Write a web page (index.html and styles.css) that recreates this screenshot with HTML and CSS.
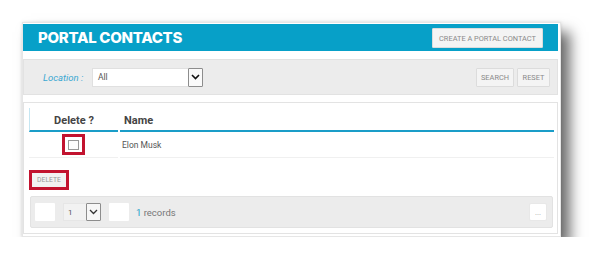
FILE: index.html
```html
<!DOCTYPE html>
<html>
<head>
<meta charset="utf-8">
<link rel="stylesheet" href="styles.css">
</head>
<body>
<div class="page">
  <div class="frame">
    <div class="titlebar">
      <h1 class="title">PORTAL CONTACTS</h1>
      <button class="btn btn-create">CREATE A PORTAL CONTACT</button>
    </div>
    <div class="filter">
      <span class="label">Location :</span>
      <div class="select select-loc">
        <span class="select-text">All</span>
        <span class="arrow"><svg width="9" height="6" viewBox="0 0 9 6"><path d="M1 1 L4.5 4.5 L8 1" fill="none" stroke="#111" stroke-width="1.6"/></svg></span>
      </div>
      <div class="spacer"></div>
      <button class="btn btn-search">SEARCH</button>
      <button class="btn btn-reset">RESET</button>
    </div>
    <div class="panel">
      <div class="thead">
        <div class="th th-del">Delete ?</div>
        <div class="th th-name">Name</div>
      </div>
      <div class="trow">
        <div class="td td-del"><span class="mark"><span class="cb"></span></span></div>
        <div class="td td-name">Elon Musk</div>
      </div>
      <div class="actions">
        <span class="mark mark-btn"><button class="btn-delete">DELETE</button></span>
      </div>
      <div class="footer">
        <span class="pbox"></span>
        <div class="select select-page">
          <span class="select-text">1</span>
          <span class="arrow"><svg width="9" height="6" viewBox="0 0 9 6"><path d="M1 1 L4.5 4.5 L8 1" fill="none" stroke="#333" stroke-width="1.3"/></svg></span>
        </div>
        <span class="pbox"></span>
        <span class="records"><span class="num">1</span> records</span>
        <div class="spacer"></div>
        <button class="btn-more">...</button>
      </div>
    </div>
  </div>
</div>
</body>
</html>
```
FILE: styles.css
```css
html, body { margin: 0; padding: 0; background: #fff; }
body { font-family: Roboto, "Liberation Sans", Arial, sans-serif; }
.page { padding: 22px 0 0 22px; }
.frame {
  width: 535px;
  height: 210px;
  background: #fff;
  padding: 1px 2px 2px 0;
  border: 1px solid #e6e6e6;
  box-sizing: content-box;
  box-shadow: 9px 10px 13px rgba(0,0,0,0.58), 0 0 3px rgba(0,0,0,0.12);
  display: flex;
  flex-direction: column;
}
.titlebar {
  height: 27px;
  background: #07a0c8;
  display: flex;
  align-items: center;
  padding: 0 15px 0 15px;
  flex-shrink: 0;
}
.title {
  margin: 0;
  flex: 1;
  font-family: Inter, "DejaVu Sans", sans-serif;
  font-weight: 800;
  font-size: 15px;
  color: #fff;
  letter-spacing: -0.3px;
  line-height: 1;
}
.btn {
  font-family: Roboto, "Liberation Sans", sans-serif;
  background: #f4f4f4;
  border: 1px solid #dcdcdc;
  color: #8a8a8a;
  font-size: 7.4px;
  padding: 0;
  height: 20px;
  border-radius: 1px;
}
.btn-create { width: 111px; height: 20px; margin-top: 1px; }
.filter {
  margin-top: 8px;
  height: 34px;
  background: #ececec;
  border: 1px solid #e2e2e2;
  display: flex;
  align-items: center;
  padding: 0 7px 0 19px;
  flex-shrink: 0;
}
.label {
  font-style: italic;
  color: #3aa8d2;
  font-size: 9.5px;
  width: 49px;
}
.select {
  display: flex;
  align-items: stretch;
  background: #fff;
  border: 1px solid #e0e0e0;
  box-sizing: border-box;
}
.select-loc { width: 111px; height: 19px; }
.select-text { flex: 1; font-size: 8.5px; color: #555; padding-left: 5px; display: flex; align-items: center; }
.arrow {
  width: 13px;
  border: 1px solid #8d8d8d;
  border-radius: 1px;
  background: #fafafa;
  display: flex;
  align-items: center;
  justify-content: center;
  margin: -1px -1px -1px 0;
}
.spacer { flex: 1; }
.btn-search { width: 38px; height: 19px; margin-right: 3px; }
.btn-reset { width: 33px; height: 19px; }
.panel {
  margin-top: 7px;
  border: 1px solid #e3e3e3;
  background: #fff;
  padding: 5px 3px 5px 5px;
  flex: 1;
  display: flex;
  flex-direction: column;
}
.thead { display: flex; height: 24px; gap: 2px; }
.th {
  font-size: 11px;
  font-weight: bold;
  color: #444;
  border-bottom: 2px solid #1a9dc8;
  display: flex;
  align-items: center;
  box-sizing: border-box;
}
.th-del {
  width: 89px;
  justify-content: center;
  border-left: 1px solid #c5e6f2;
  padding-top: 2px;
}
.th-name { flex: 1; padding-left: 4px; padding-top: 2px; }
.trow { display: flex; height: 26px; gap: 2px; }
.td {
  border-bottom: 1px solid #f0f0f0;
  box-sizing: border-box;
  display: flex;
  align-items: center;
}
.td-del { width: 89px; justify-content: center; }
.td-name { flex: 1; font-size: 8.5px; color: #555; padding-left: 2px; }
.mark {
  border: 3px solid #c2132f;
  width: 17px;
  height: 15px;
  display: flex;
  align-items: center;
  justify-content: center;
  margin-left: -1px;
}
.cb {
  width: 9px;
  height: 8px;
  border: 1px solid #9a9a9a;
  background: #fff;
}
.actions { margin-top: 12px; display: flex; }
.mark-btn { width: 34px; height: 14px; margin-left: 0; }
.btn-delete {
  font-family: Roboto, "Liberation Sans", sans-serif;
  background: #f2f2f2;
  border: 0;
  color: #9a9a9a;
  font-size: 6.8px;
  width: 34px;
  height: 14px;
  padding: 0;
}
.footer {
  margin: 6px 1px 0 1px;
  height: 30px;
  background: #ececec;
  border: 1px solid #e2e2e2;
  border-radius: 2px;
  display: flex;
  align-items: center;
  padding: 0 5px 0 4px;
}
.pbox { width: 20px; height: 18px; background: #fff; border-radius: 1px; }
.select-page {
  width: 38px; height: 18px; margin: 0 8px;
  background: #f2f2f2; border: 1px solid #e6e6e6;
}
.select-page .select-text { font-size: 8px; padding-left: 4px; }
.select-page .arrow { width: 13px; background: #f7f7f7; }
.records { margin-left: 7px; font-size: 9.5px; color: #777; }
.num { color: #1a9dc8; }
.btn-more {
  width: 18px; height: 18px; padding: 0;
  background: #fff; border: 1px solid #e8e8e8; border-radius: 2px;
  color: #999; font-size: 7px; line-height: 1;
}
```
